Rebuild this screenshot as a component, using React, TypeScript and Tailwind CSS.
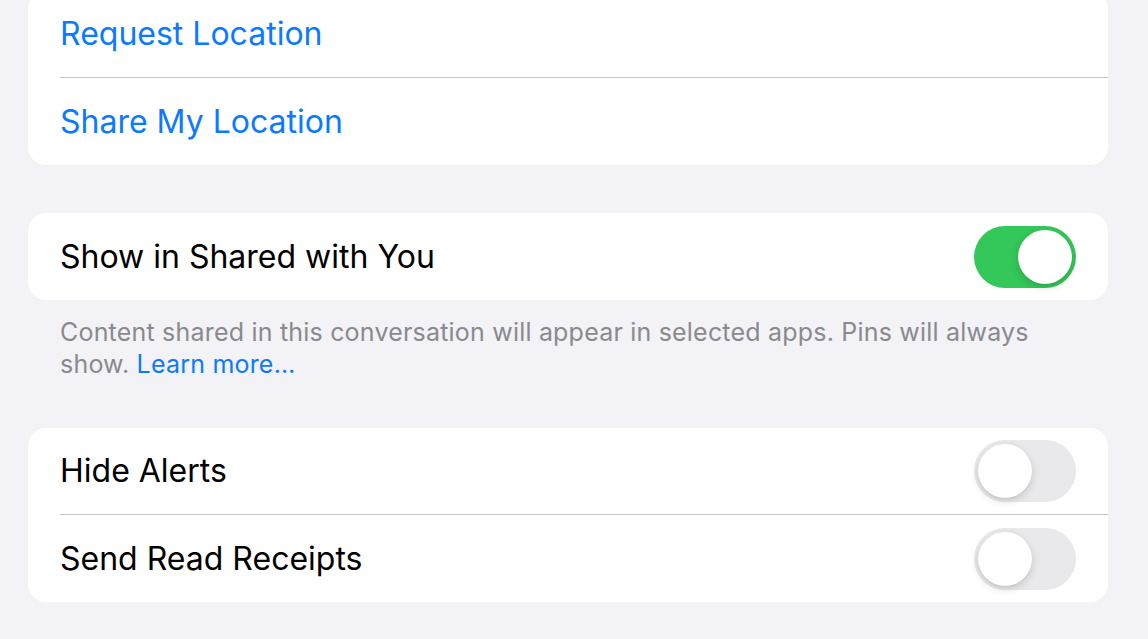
import React from "react"

function Toggle({ on }: { on: boolean }) {
    return (
        <div
            className={`flex h-[62px] w-[102px] items-center rounded-full p-[4px] ${
                on ? "justify-end bg-[#34c759]" : "justify-start bg-[#e9e9eb]"
            }`}
        >
            <div className="h-[54px] w-[54px] rounded-full bg-white shadow-[0_3px_8px_rgba(0,0,0,0.15),0_1px_1px_rgba(0,0,0,0.06)]" />
        </div>
    )
}

function Row({
    label,
    blue,
    toggle,
    divider,
}: {
    label: string
    blue?: boolean
    toggle?: boolean
    divider?: boolean
}) {
    return (
        <div className="pl-[32px]">
            <div
                className={`flex h-[87px] items-center justify-between pr-[32px] ${
                    divider ? "border-b border-[#c6c6c8]" : ""
                }`}
            >
                <span className={`text-[32px] ${blue ? "text-[#0a7aff]" : "text-black"}`}>{label}</span>
                {toggle !== undefined && <Toggle on={toggle} />}
            </div>
        </div>
    )
}

export default function App() {
    return (
        <div
            className="h-[639px] w-[1148px] overflow-hidden bg-[#f2f2f7] pl-[28px] pr-[40px]"
            style={{ fontFamily: "Inter, 'Noto Sans', sans-serif" }}
        >
            <div className="mt-[-9px] overflow-hidden rounded-[18px] bg-white">
                <Row label="Request Location" blue divider />
                <Row label="Share My Location" blue />
            </div>

            <div className="mt-[48px] overflow-hidden rounded-[18px] bg-white">
                <Row label="Show in Shared with You" toggle={true} />
            </div>
            <p className="px-[32px] pt-[16px] text-[25px] leading-[32px] tracking-[0.2px] text-[#8a8a8e]">
                Content shared in this conversation will appear in selected apps. Pins will always show.{" "}
                <span className="text-[#0a7aff]">Learn more…</span>
            </p>

            <div className="mt-[48px] overflow-hidden rounded-[18px] bg-white">
                <Row label="Hide Alerts" toggle={false} divider />
                <Row label="Send Read Receipts" toggle={false} />
            </div>
        </div>
    )
}
